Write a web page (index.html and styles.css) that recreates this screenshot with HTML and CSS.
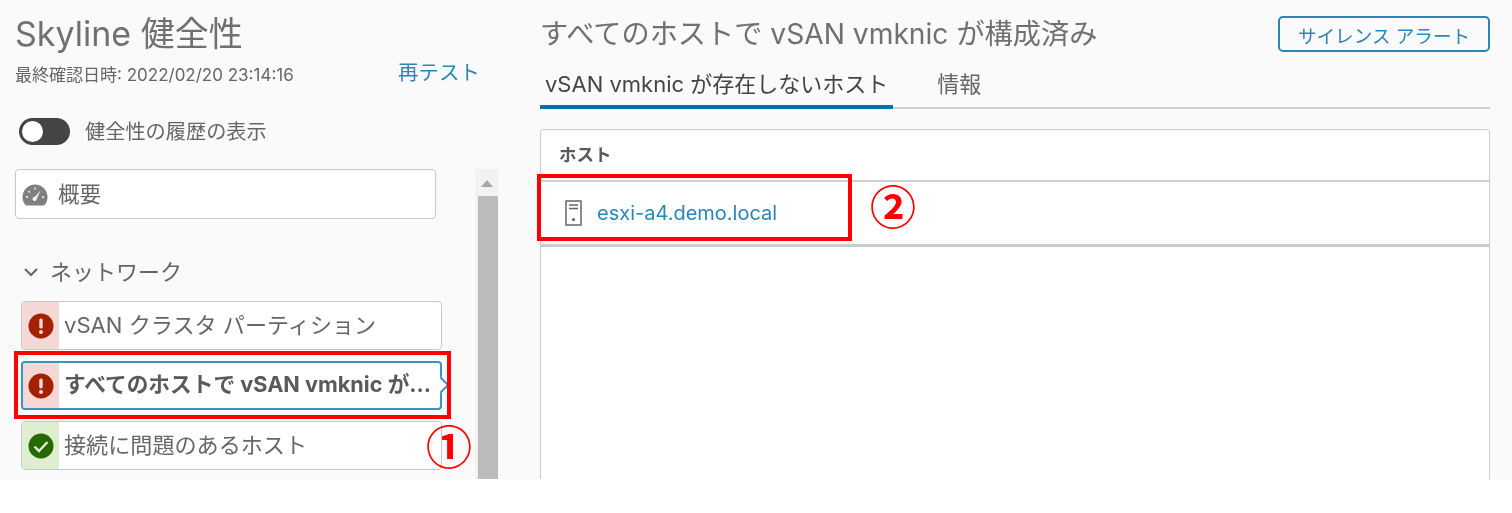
FILE: index.html
```html
<!DOCTYPE html>
<html lang="ja">
<head>
    <title>Skyline 健全性</title>
    <meta charset="UTF-8"/>
    <link rel="stylesheet" href="styles.css">
</head>
<body>
    <div class="page">
        <div class="side">
            <h1 class="side-title">Skyline 健全性</h1>
            <div class="side-meta">
                <span class="side-date">最終確認日時: 2022/02/20 23:14:16</span>
                <a class="link retest">再テスト</a>
            </div>
            <div class="history">
                <span class="toggle"></span>
                <span class="history-label">健全性の履歴の表示</span>
            </div>
            <div class="side-scroll">
                <div class="side-list">
                    <div class="overview">
                        <svg class="gauge" width="26" height="23" viewBox="0 0 26 23">
                            <path d="M4 22.5C1.6 20.200.5 17.300.5 14.200.5 7.200 6 1.500 13 1.500s12.500 5.700 12.500 12.700c0 3.100-1.100 6-3.500 8.300z" fill="#808080"/>
                            <path d="M11.500 15.500l7-8-4.500 9.500z" fill="#fafafa"/>
                            <circle cx="12.500" cy="16" r="2" fill="#fafafa"/>
                            <path d="M4 14h2M20 14h2M6.500 8l1.500 1.500M13 4.500v2" stroke="#fafafa" stroke-width="1.300"/>
                        </svg>
                        <span class="lift">概要</span>
                    </div>
                    <div class="group">
                        <svg width="14" height="9" viewBox="0 0 14 9"><path d="M1 1l6 6 6-6" fill="none" stroke="#666" stroke-width="2"/></svg>
                        <span class="lift">ネットワーク</span>
                    </div>
                    <div class="check">
                        <span class="band band-red">
                            <svg class="status" width="26" height="26" viewBox="0 0 26 26"><circle cx="13" cy="13" r="12.500" fill="#a32100"/><rect x="11.300" y="5.500" width="3.400" height="10" rx="1.500" fill="#f6dcd8"/><circle cx="13" cy="19" r="2" fill="#f6dcd8"/></svg>
                        </span>
                        <span class="check-name">vSAN クラスタ パーティション</span>
                    </div>
                    <div class="check check-active">
                        <span class="band band-red">
                            <svg class="status" width="26" height="26" viewBox="0 0 26 26"><circle cx="13" cy="13" r="12.500" fill="#a32100"/><rect x="11.300" y="5.500" width="3.400" height="10" rx="1.500" fill="#f6dcd8"/><circle cx="13" cy="19" r="2" fill="#f6dcd8"/></svg>
                        </span>
                        <span class="check-name">すべてのホストで vSAN vmknic が...</span>
                        <span class="notch"></span>
                    </div>
                    <div class="check">
                        <span class="band band-green">
                            <svg class="status" width="26" height="26" viewBox="0 0 26 26"><circle cx="13" cy="13" r="12.500" fill="#266900"/><path d="M6.500 13.500l4.500 4.500 8.500-9" fill="none" stroke="#e3f0d6" stroke-width="2.400"/></svg>
                        </span>
                        <span class="check-name">接続に問題のあるホスト</span>
                    </div>
                </div>
                <div class="scrollbar">
                    <span class="scroll-up"></span>
                    <span class="scroll-thumb"></span>
                </div>
            </div>
        </div>
        <div class="main">
            <div class="main-head">
                <h2 class="main-title">すべてのホストで vSAN vmknic が構成済み</h2>
                <button class="silence">サイレンス アラート</button>
            </div>
            <div class="tabs">
                <span class="tab tab-active">vSAN vmknic が存在しないホスト</span>
                <span class="tab">情報</span>
            </div>
            <div class="grid">
                <div class="grid-head">ホスト</div>
                <div class="grid-row">
                    <svg width="17" height="26" viewBox="0 0 17 26">
                        <rect x="1" y="1" width="15" height="24" fill="none" stroke="#666" stroke-width="1.500"/>
                        <path d="M4 5h9M4 8.500h9" stroke="#666" stroke-width="1.500"/>
                        <circle cx="8.500" cy="19.500" r="1.600" fill="#666"/>
                    </svg>
                    <a class="link host">esxi-a4.demo.local</a>
                </div>
                <div class="grid-foot"></div>
            </div>
        </div>

        <!-- 赤枠の注釈 -->
        <div class="mark mark-check"></div>
        <div class="mark mark-host"></div>
        <span class="num num-one">①</span>
        <span class="num num-two">②</span>
    </div>
</body>
</html>
```

FILE: styles.css
```css
body {
    margin: 0;
    background-color: #ffffff;
    color: #666666;
    font-family: Inter, "Noto Sans CJK JP", sans-serif;
}
.page {
    position: relative;
    display: flex;
    height: 479px;
    background-color: #fafafa;
    overflow: hidden;
    filter: blur(0.35px);
}
.link {
    color: #2a86b5;
}
.lift {
    position: relative;
    top: -2px;
}
.side {
    width: 498px;
    padding-left: 15px;
    box-sizing: border-box;
    flex-shrink: 0;
}
.side-title {
    margin: 12px 0 0 0;
    height: 44px;
    font-size: 34px;
    line-height: 44px;
    font-weight: 400;
    color: #707070;
}
.side-meta {
    display: flex;
    justify-content: space-between;
    align-items: flex-start;
    width: 465px;
    height: 44px;
    margin-top: 5px;
}
.side-date {
    margin-top: 2px;
    font-size: 17px;
    line-height: 24px;
}
.retest {
    font-size: 20.500px;
    line-height: 24px;
}
.history {
    display: flex;
    align-items: center;
    gap: 15px;
    height: 27px;
    margin: 13px 0 24px 4px;
}
.toggle {
    width: 51px;
    height: 27px;
    border-radius: 14px;
    background-color: #444444;
    position: relative;
}
.toggle::after {
    content: "";
    position: absolute;
    left: 3px;
    top: 3px;
    width: 21px;
    height: 21px;
    border-radius: 50%;
    background-color: #ffffff;
}
.history-label {
    font-size: 20.200px;
    line-height: 27px;
}
.side-scroll {
    display: flex;
    justify-content: space-between;
    height: 310px;
}
.side-list {
    width: 437px;
}
.overview {
    display: flex;
    align-items: center;
    gap: 10px;
    width: 421px;
    height: 50px;
    padding-left: 6px;
    box-sizing: border-box;
    background-color: #ffffff;
    border: 1px solid #c8c8c8;
    border-radius: 4px;
    font-size: 21.500px;
}
.group {
    display: flex;
    align-items: center;
    gap: 12px;
    height: 30px;
    margin: 38px 0 14px 9px;
    font-size: 22px;
}
.check {
    position: relative;
    display: flex;
    align-items: center;
    width: 421px;
    height: 49px;
    margin: 0 0 11px 6px;
    box-sizing: border-box;
    background-color: #ffffff;
    border: 1px solid #c8c8c8;
    border-radius: 4px;
}
.check-active {
    border: 2px solid #3a93c0;
}
.notch {
    position: absolute;
    right: -7px;
    top: 16px;
    width: 10px;
    height: 10px;
    background-color: #ffffff;
    border-top: 2px solid #3a93c0;
    border-right: 2px solid #3a93c0;
    transform: rotate(45deg);
}
.band {
    display: flex;
    align-items: center;
    justify-content: center;
    width: 37px;
    height: 100%;
    flex-shrink: 0;
    border-radius: 3px 0 0 3px;
}
.check-active .band {
    width: 36px;
}
.band-red {
    background-color: #f5d8d6;
}
.band-green {
    background-color: #dfeed0;
}
.check-name {
    position: relative;
    top: -3px;
    margin-left: 5px;
    font-size: 22.100px;
    white-space: nowrap;
}
.check-active .check-name {
    font-weight: 700;
    font-size: 21.700px;
    color: #5a5a5a;
}
.scrollbar {
    display: flex;
    flex-direction: column;
    align-items: flex-end;
    width: 23px;
    height: 310px;
    background-color: #f2f2f2;
}
.scroll-up {
    display: block;
    width: 0;
    height: 0;
    margin: 11px 5px 9px 0;
    border-left: 6px solid transparent;
    border-right: 6px solid transparent;
    border-bottom: 7px solid #a8a8a8;
}
.scroll-thumb {
    display: block;
    width: 20px;
    flex: 1;
    background-color: #bbbbbb;
}
.main {
    width: 950px;
    margin-left: 42px;
}
.main-head {
    display: flex;
    justify-content: space-between;
    align-items: flex-start;
    height: 64px;
    padding-top: 16px;
    box-sizing: border-box;
}
.main-title {
    margin: 0;
    font-size: 28.200px;
    line-height: 36px;
    font-weight: 400;
    color: #707070;
}
.silence {
    width: 212px;
    height: 36px;
    padding: 0;
    border: 2px solid #2a86b5;
    border-radius: 5px;
    background-color: #fafafa;
    color: #2a86b5;
    font-family: inherit;
    font-size: 18.600px;
}
.tabs {
    display: flex;
    gap: 39px;
    height: 45px;
    box-sizing: border-box;
    border-bottom: 2px solid #d0d0d0;
}
.tab {
    height: 45px;
    padding: 0 5px;
    box-sizing: border-box;
    font-size: 22px;
    line-height: 41px;
}
.tab-active {
    color: #444444;
    border-bottom: 4px solid #0072b0;
}
.grid {
    margin-top: 20px;
    height: 360px;
    background-color: #ffffff;
    border: 1px solid #cccccc;
    border-radius: 3px;
}
.grid-head {
    height: 50px;
    padding-left: 18px;
    font-size: 17.500px;
    font-weight: 700;
    line-height: 50px;
    color: #5a5a5a;
    border-bottom: 2px solid #d0d0d0;
}
.grid-row {
    display: flex;
    align-items: center;
    gap: 15px;
    height: 62px;
    padding-left: 24px;
    border-bottom: 3px solid #cccccc;
}
.host {
    font-size: 20px;
}
.mark {
    position: absolute;
    box-sizing: border-box;
    border: 4px solid #ff0000;
}
.mark-check {
    left: 14px;
    top: 351px;
    width: 437px;
    height: 68px;
}
.mark-host {
    left: 537px;
    top: 174px;
    width: 315px;
    height: 67px;
}
.num {
    position: absolute;
    font-family: "Noto Sans CJK JP", sans-serif;
    font-size: 46px;
    line-height: 50px;
    font-weight: 700;
    color: #ff0000;
}
.num-one {
    left: 426px;
    top: 419px;
}
.num-two {
    left: 870px;
    top: 179px;
}
```
